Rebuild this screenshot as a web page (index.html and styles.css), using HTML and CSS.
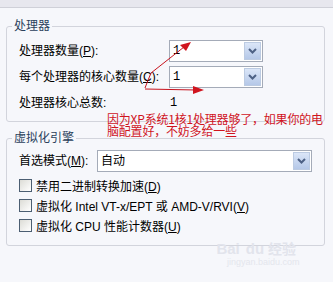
FILE: index.html
```html
<!DOCTYPE html>
<html lang="zh-CN">
<head>
<meta charset="utf-8">
<title>处理器</title>
<link rel="stylesheet" href="styles.css">
</head>
<body>
<div class="topbar"></div>
<main class="page">
  <fieldset class="group group-cpu">
    <legend class="group-title">处理器</legend>
    <div class="cpu-grid">
      <span class="label">处理器数量(<u>P</u>):</span>
      <div class="combo combo-small"><span class="combo-value">1</span><span class="combo-btn"><svg width="9" height="6" viewBox="0 0 9 6"><path d="M1 1 L4.5 4.5 L8 1" fill="none" stroke="#4d6185" stroke-width="2"/></svg></span></div>
      <span class="label">每个处理器的核心数量(<u>C</u>):</span>
      <div class="combo combo-small"><span class="combo-value">1</span><span class="combo-btn"><svg width="9" height="6" viewBox="0 0 9 6"><path d="M1 1 L4.5 4.5 L8 1" fill="none" stroke="#4d6185" stroke-width="2"/></svg></span></div>
      <span class="label">处理器核心总数:</span>
      <span class="static-value">1</span>
    </div>
  </fieldset>

  <fieldset class="group group-virt">
    <legend class="group-title">虚拟化引擎</legend>
    <div class="mode-row">
      <span class="label">首选模式(<u>M</u>):</span>
      <div class="combo combo-wide"><span class="combo-value">自动</span><span class="combo-btn"><svg width="9" height="6" viewBox="0 0 9 6"><path d="M1 1 L4.5 4.5 L8 1" fill="none" stroke="#4d6185" stroke-width="2"/></svg></span></div>
    </div>
    <ul class="check-list">
      <li class="check-row"><span class="checkbox"></span><span>禁用二进制转换加速(<u>D</u>)</span></li>
      <li class="check-row"><span class="checkbox"></span><span>虚拟化 Intel VT-x/EPT 或 AMD-V/RVI(<u>V</u>)</span></li>
      <li class="check-row"><span class="checkbox"></span><span>虚拟化 CPU 性能计数器(<u>U</u>)</span></li>
    </ul>
  </fieldset>

  <div class="note">因为XP系统1核1处理器够了，如果你的电<br>脑配置好，不妨多给一些</div>

  <svg class="arrows" width="333" height="282" viewBox="0 0 333 282">
    <g stroke="#c8141e" stroke-width="1" fill="none">
      <path d="M145 88 Q148 80 151 73 L184 47"/>
      <path d="M145 89 L196 90"/>
    </g>
    <g fill="#d0141e">
      <path d="M191 42 L180 45 L186 51 Z"/>
      <path d="M204 90 L193 86 L193 94 Z"/>
    </g>
  </svg>

  <div class="watermark">
    <div class="wm-logo"><span class="wm-bai">Bai</span><span class="wm-du">du</span><span class="wm-jy">经验</span></div>
    <div class="wm-url">jingyan.baidu.com</div>
  </div>
</main>
</body>
</html>
```

FILE: styles.css
```css
html, body {
  margin: 0;
  padding: 0;
}
body {
  width: 333px;
  height: 282px;
  overflow: hidden;
  background: #f6f7fb;
  font-family: "Liberation Sans", "Noto Sans CJK SC", sans-serif;
  font-size: 12px;
  color: #000;
}
.topbar {
  height: 7px;
  background: #e7e7ee;
  border-bottom: 1px solid #cfd0d8;
}
.page {
  position: relative;
  height: 274px;
  padding: 11px 8px 0 6px;
  box-sizing: border-box;
}
.group {
  margin: 0;
  padding: 7px 12px 7px 12px;
  border: 1px solid #d2d4dc;
  border-radius: 3px;
  min-width: 0;
}
.group-title {
  margin-left: -7px;
  padding: 0 2px;
  line-height: 14px;
  font-size: 12px;
  color: #2a3f5c;
}
.group-virt {
  margin-top: 9px;
  padding-top: 5px;
  padding-bottom: 10px;
}
.cpu-grid {
  display: grid;
  grid-template-columns: 150px 94px;
  grid-auto-rows: 22px;
  row-gap: 4px;
  align-items: center;
}
.label {
  line-height: 14px;
  white-space: nowrap;
}
.static-value {
  padding-left: 1px;
  line-height: 12px;
  font-family: "Liberation Mono", monospace;
}
.combo {
  display: flex;
  height: 22px;
  box-sizing: border-box;
  border: 1px solid #a4abb8;
  background: #fff;
}
.combo-value {
  flex: 1;
  padding-left: 3px;
  line-height: 20px;
}
.combo-small .combo-value {
  font-family: "Liberation Mono", monospace;
}
.combo-btn {
  width: 15px;
  margin: 1px;
  border: 1px solid #bccbe2;
  background: linear-gradient(#dbe6f8, #b5c8e8);
  display: flex;
  align-items: center;
  justify-content: center;
}
.mode-row {
  display: grid;
  grid-template-columns: 78px 215px;
  align-items: center;
}
.check-list {
  list-style: none;
  margin: 3px 0 0;
  padding: 0;
}
.check-row {
  display: flex;
  align-items: center;
  gap: 4px;
  height: 20px;
  white-space: nowrap;
}
.checkbox {
  width: 13px;
  height: 13px;
  box-sizing: border-box;
  border: 1px solid #4b5e72;
  background: linear-gradient(135deg, #dcdcd6, #ffffff);
}
.note {
  position: absolute;
  left: 107px;
  top: 105px;
  color: #d0141e;
  font-family: "Noto Sans CJK SC", sans-serif;
  font-size: 12px;
  line-height: 12px;
  white-space: nowrap;
  letter-spacing: -0.2px;
}
.arrows {
  position: absolute;
  left: 0;
  top: -8px;
  pointer-events: none;
}
.watermark {
  position: absolute;
  left: 213px;
  top: 232px;
  color: #e2e4ec;
  text-align: center;
}
.wm-logo {
  font-family: "Liberation Sans", sans-serif;
  font-weight: bold;
  font-size: 15px;
  line-height: 16px;
}
.wm-du {
  margin-left: 6px;
}
.wm-jy {
  margin-left: 4px;
  font-family: "Noto Sans CJK SC", sans-serif;
  font-size: 14px;
}
.wm-url {
  font-size: 9px;
  line-height: 11px;
  margin-left: 14px;
  color: #e4e6ed;
}
```
